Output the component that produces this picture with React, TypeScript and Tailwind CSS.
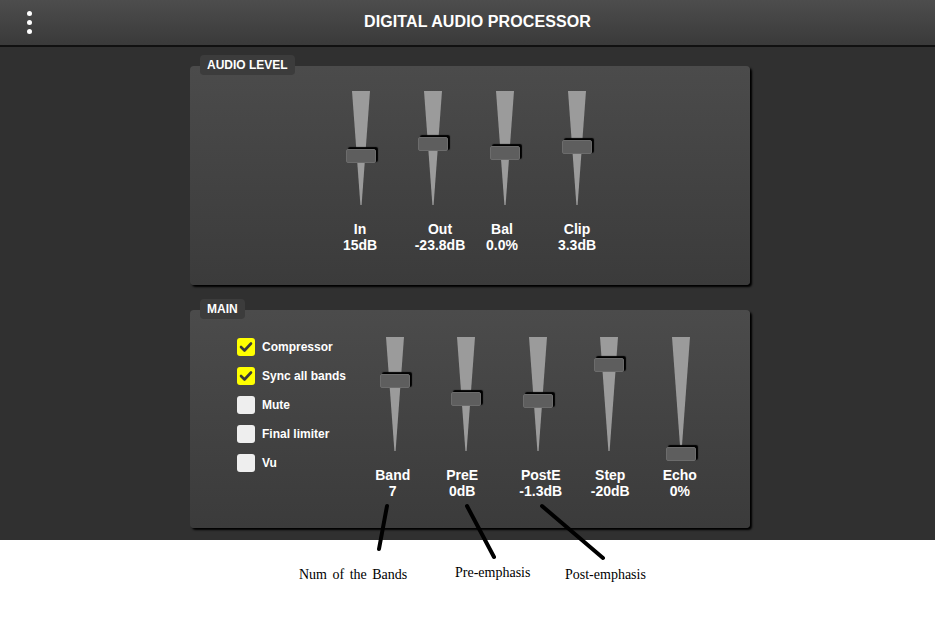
import React from 'react';

type Fader = { name: string; value: string; pos: number; dx: number };

const levelFaders: Fader[] = [
  { name: 'In', value: '15dB', pos: 58, dx: -1 },
  { name: 'Out', value: '-23.8dB', pos: 46, dx: 7 },
  { name: 'Bal', value: '0.0%', pos: 55, dx: -3 },
  { name: 'Clip', value: '3.3dB', pos: 49, dx: 0 },
];

const mainFaders: Fader[] = [
  { name: 'Band', value: '7', pos: 37, dx: -2 },
  { name: 'PreE', value: '0dB', pos: 55, dx: -4 },
  { name: 'PostE', value: '-1.3dB', pos: 57, dx: 3 },
  { name: 'Step', value: '-20dB', pos: 21, dx: 1 },
  { name: 'Echo', value: '0%', pos: 110, dx: -1 },
];

const options = [
  { label: 'Compressor', on: true },
  { label: 'Sync all bands', on: true },
  { label: 'Mute', on: false },
  { label: 'Final limiter', on: false },
  { label: 'Vu', on: false },
];

const Slider = ({ f, width }: { f: Fader; width: string }) => {
  return (
    <div className={`flex flex-col items-center ${width}`}>
      <div className="relative w-[30px] h-[114px] flex justify-center">
        <svg width="18" height="114" viewBox="0 0 18 114">
          <polygon points="0,0 18,0 9.6,114 8.4,114" fill="#9b9b9b" />
        </svg>
        <div
          className="absolute left-0 w-[30px] h-[14px] rounded-[2px] bg-[#5e5e5e] border border-[#6c6c6c] shadow-[2px_-1.5px_1px_#000]"
          style={{ top: f.pos }}
        />
      </div>
      <div className="mt-[16px] text-center text-white font-bold text-[14px] leading-[16px]" style={{ transform: `translateX(${f.dx}px)` }}>
        <div>{f.name}</div>
        <div>{f.value}</div>
      </div>
    </div>
  );
};

const Tab = ({ title }: { title: string }) => (
  <div className="relative z-10 ml-[10px] self-start h-[20px] px-[7px] flex items-center rounded-[4px] bg-[#3c3c3c] text-white font-bold text-[12px]">
    {title}
  </div>
);

const Panel = ({ title, h, children }: { title: string; h: string; children: React.ReactNode }) => (
  <div className="flex flex-col w-[560px]">
    <Tab title={title} />
    <div className={`-mt-[9px] ${h} rounded-[4px] bg-linear-to-b from-[#4b4b4b] to-[#3b3b3b] shadow-[2px_2px_2px_#000]`}>
      {children}
    </div>
  </div>
);

const Check = ({ on }: { on: boolean }) => (
  <div className={`w-[18px] h-[18px] rounded-[3px] flex items-center justify-center ${on ? 'bg-[#ffff00]' : 'bg-[#eeeeee]'}`}>
    {on && (
      <svg width="14" height="14" viewBox="0 0 14 14">
        <polyline points="2,7 5.5,10.5 12,3.5" fill="none" stroke="#3a3a3a" strokeWidth="2.6" strokeLinecap="round" strokeLinejoin="round" />
      </svg>
    )}
  </div>
);

export default function App() {
  return (
    <div className="relative bg-white min-h-[619px] font-['Liberation_Sans',Arial,sans-serif]">
      <header className="h-[47px] flex items-center bg-linear-to-b from-[#4d4d4d] to-[#3a3a3a] border-b-2 border-[#111]">
        <div className="w-[58px] flex flex-col items-center gap-[4px]">
          <span className="w-[5px] h-[5px] rounded-full bg-white" />
          <span className="w-[5px] h-[5px] rounded-full bg-white" />
          <span className="w-[5px] h-[5px] rounded-full bg-white" />
        </div>
        <h1 className="flex-1 pr-[38px] mb-[1px] text-center text-white font-bold text-[16px] tracking-[0.1px]">DIGITAL AUDIO PROCESSOR</h1>
      </header>

      <main className="bg-[#303030] pl-[190px] pt-[8px] pb-[12px] flex flex-col gap-[14px]">
        <Panel title="AUDIO LEVEL" h="h-[219px]">
          <div className="flex pt-[25px] pl-[135px]">
            {levelFaders.map((f) => (
              <Slider key={f.name} f={f} width="w-[72px]" />
            ))}
          </div>
        </Panel>

        <Panel title="MAIN" h="h-[218px]">
          <div className="flex pt-[27px]">
            <div className="w-[169px] pl-[47px] pt-[1px] flex flex-col gap-[11px]">
              {options.map((o) => (
                <div key={o.label} className="flex items-center gap-[7px] h-[18px]">
                  <Check on={o.on} />
                  <span className="text-white font-bold text-[12px]">{o.label}</span>
                </div>
              ))}
            </div>
            {mainFaders.map((f) => (
              <Slider key={f.name} f={f} width="w-[71.5px]" />
            ))}
          </div>
        </Panel>
      </main>

      <div className="h-[79px] flex items-start pt-[27px] pl-[299px] font-['Liberation_Serif',serif] text-[14px] leading-[16px] text-black">
        <span className="w-[156px] [word-spacing:2px]">Num of the Bands</span>
        <span className="w-[110px] -mt-[2px]">Pre-emphasis</span>
        <span>Post-emphasis</span>
      </div>

      <svg className="absolute left-0 top-0 pointer-events-none" width="935" height="619">
        <g stroke="#000" strokeWidth="4" strokeLinecap="round">
          <line x1="387" y1="506" x2="379" y2="549" />
          <line x1="467" y1="506" x2="494" y2="557" />
          <line x1="542" y1="506" x2="603" y2="558" />
        </g>
      </svg>
    </div>
  );
}
